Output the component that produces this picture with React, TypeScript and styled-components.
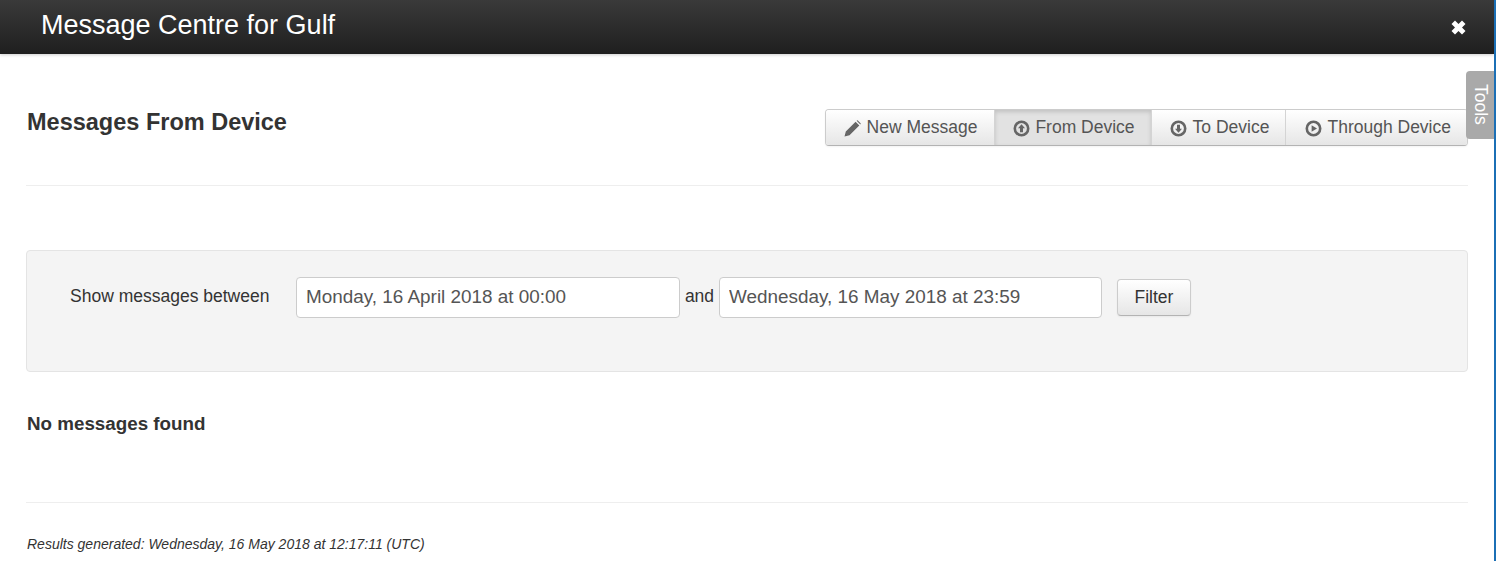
import * as React from 'react';
import styled, { createGlobalStyle } from 'styled-components';

const GlobalStyle = createGlobalStyle`
	html, body {
		margin: 0;
		padding: 0;
		background: #fff;
	}
	body {
		font-family: "Liberation Sans", Arial, sans-serif;
		font-size: 17.5px;
		color: #333;
		overflow: hidden;
	}
	* {
		box-sizing: border-box;
	}
`;

const Page = styled.div`
	position: relative;
	width: 1496px;
	height: 561px;
	overflow: hidden;
	background: #fff;
	border-right: 2px solid #1b6fb5;
`;

const TitleBar = styled.header`
	height: 54px;
	display: flex;
	align-items: center;
	justify-content: space-between;
	padding: 0 27px 5px 41px;
	background: linear-gradient(to bottom, #3a3a3a, #1f1f1f);
	box-shadow: 0 1px 3px rgba(0, 0, 0, 0.2);
`;

const Title = styled.h1`
	margin: 0;
	font-size: 27px;
	font-weight: 400;
	line-height: 40px;
	color: #fff;
`;

const CloseSvg = styled.svg`
	width: 17px;
	height: 17px;
	margin-top: 5px;
	fill: #fff;
`;

const Content = styled.main`
	padding: 0 26px;
`;

const HeadRow = styled.div`
	height: 132px;
	display: flex;
	justify-content: space-between;
	align-items: flex-start;
	padding-top: 55px;
	border-bottom: 1px solid #eee;
`;

const Heading = styled.h2`
	margin: 0;
	padding-left: 1px;
	font-size: 23.5px;
	font-weight: 700;
	line-height: 26px;
	color: #333;
`;

const TabGroup = styled.div`
	display: flex;
	height: 37px;
	border: 1px solid #ccc;
	border-bottom-color: #b3b3b3;
	border-radius: 4px;
	overflow: hidden;
	box-shadow: 0 1px 2px rgba(0, 0, 0, 0.05);
`;

const Tab = styled.button<{ $active?: boolean }>`
	display: flex;
	align-items: center;
	gap: 6px;
	height: 100%;
	padding: 0 16px 0 18px;
	border: 0;
	border-left: 1px solid #d4d4d4;
	font: inherit;
	font-size: 17.5px;
	color: #555;
	background: ${(p) =>
		p.$active ? '#e2e2e2' : 'linear-gradient(to bottom, #fff, #e6e6e6)'};
	box-shadow: ${(p) => (p.$active ? 'inset 0 2px 4px rgba(0, 0, 0, 0.15)' : 'none')};

	&:first-child {
		border-left: 0;
		padding-right: 17px;
	}

	&:nth-child(2) {
		gap: 5px;
	}

	&:last-child {
		gap: 5px;
		padding-left: 19px;
	}
`;

const TabIconSvg = styled.svg`
	width: 17px;
	height: 17px;
	flex: none;
	margin-top: 2px;
`;

const ToolsTab = styled.div`
	position: absolute;
	top: 71px;
	right: 0;
	width: 28px;
	height: 68px;
	display: flex;
	align-items: center;
	justify-content: center;
	padding-bottom: 2px;
	background: #a9a9a9;
	border-radius: 4px 0 0 4px;
	color: #fff;
	font-size: 17.5px;
	writing-mode: vertical-rl;
`;

const FilterPanel = styled.section`
	height: 122px;
	margin-top: 64px;
	display: flex;
	align-items: flex-start;
	padding: 26px 0 0 43px;
	background: #f4f4f4;
	border: 1px solid #e4e4e4;
	border-radius: 4px;
`;

const FilterLabel = styled.label`
	width: 226px;
	flex: none;
	line-height: 39px;
	color: #333;
`;

const DateInput = styled.input<{ $width: number }>`
	width: ${(p) => p.$width}px;
	height: 41px;
	padding: 0 9px 2px;
	border: 1px solid #ccc;
	border-radius: 4px;
	background: #fff;
	font: inherit;
	font-size: 18.9px;
	color: #555;
`;

const Conjunction = styled.span`
	width: 39px;
	flex: none;
	text-align: center;
	line-height: 39px;
	color: #333;
`;

const FilterButton = styled.button`
	height: 37px;
	width: 74px;
	margin: 2px 0 0 15px;
	border: 1px solid #ccc;
	border-bottom-color: #b3b3b3;
	border-radius: 4px;
	background: linear-gradient(to bottom, #fff, #e6e6e6);
	box-shadow: 0 1px 2px rgba(0, 0, 0, 0.05);
	font: inherit;
	color: #333;
`;

const EmptyText = styled.p`
	margin: 0;
	height: 131px;
	padding: 40px 0 0 1px;
	border-bottom: 1px solid #eee;
	font-size: 18.8px;
	font-weight: 700;
	line-height: 24px;
	color: #333;
`;

const Generated = styled.p`
	margin: 32px 0 0;
	padding-left: 1px;
	font-size: 14px;
	font-style: italic;
	line-height: 18px;
	color: #333;
`;

const CloseIcon = () => (
	<CloseSvg viewBox="0 0 17 17">
		<path d="M5 1.5 8.5 5 12 1.5 15.5 5 12 8.5 15.5 12 12 15.5 8.5 12 5 15.5 1.5 12 5 8.5 1.5 5z" />
	</CloseSvg>
);

const PencilIcon = () => (
	<TabIconSvg viewBox="0 0 17 17">
		<path d="M0.5 16.5 1.8 11.5 11.6 1.7 15.3 5.4 5.5 15.2z M12.6 0.7 13.6 0.2 16.8 3.4 16.3 4.4z" fill="#666" />
	</TabIconSvg>
);

const CircleIcon = ({ kind }: { kind: 'up' | 'down' | 'play' }) => (
	<TabIconSvg viewBox="0 0 17 17">
		<circle cx="8.5" cy="8.5" r="6.7" fill="none" stroke="#666" strokeWidth="2.6" />
		{kind === 'up' && <path d="M8.5 4.2 12 8.2H10V12.2H7V8.2H5z" fill="#666" />}
		{kind === 'down' && <path d="M8.5 12.8 12 8.8H10V4.8H7V8.8H5z" fill="#666" />}
		{kind === 'play' && <path d="M6.6 5.2 12 8.5 6.6 11.8z" fill="#666" />}
	</TabIconSvg>
);

const App = () => (
	<Page>
		<GlobalStyle />
		<TitleBar>
			<Title>Message Centre for Gulf</Title>
			<CloseIcon />
		</TitleBar>
		<ToolsTab>Tools</ToolsTab>
		<Content>
			<HeadRow>
				<Heading>Messages From Device</Heading>
				<TabGroup>
					<Tab>
						<PencilIcon />
						New Message
					</Tab>
					<Tab $active>
						<CircleIcon kind="up" />
						From Device
					</Tab>
					<Tab>
						<CircleIcon kind="down" />
						To Device
					</Tab>
					<Tab>
						<CircleIcon kind="play" />
						Through Device
					</Tab>
				</TabGroup>
			</HeadRow>
			<FilterPanel>
				<FilterLabel>Show messages between</FilterLabel>
				<DateInput $width={384} readOnly value="Monday, 16 April 2018 at 00:00" />
				<Conjunction>and</Conjunction>
				<DateInput $width={383} readOnly value="Wednesday, 16 May 2018 at 23:59" />
				<FilterButton>Filter</FilterButton>
			</FilterPanel>
			<EmptyText>No messages found</EmptyText>
			<Generated>Results generated: Wednesday, 16 May 2018 at 12:17:11 (UTC)</Generated>
		</Content>
	</Page>
);

export default App;
